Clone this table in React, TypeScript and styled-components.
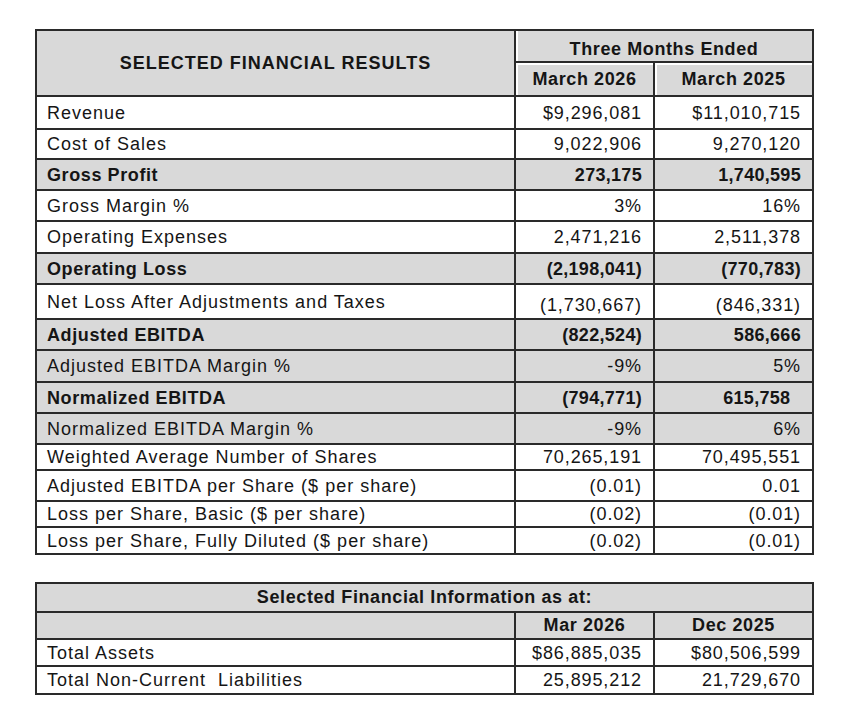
import React from "react";
import styled, { createGlobalStyle } from "styled-components";

const GlobalStyle = createGlobalStyle`
  html, body {
    margin: 0;
    padding: 0;
    background: #ffffff;
  }
  body {
    font-family: "Liberation Sans", Arial, sans-serif;
    color: #151515;
  }
`;

const Page = styled.div`
  display: flex;
  flex-direction: column;
  gap: 27px;
  padding: 29px 0 0 35px;
`;

const Table = styled.table`
  width: 777px;
  border-collapse: collapse;
  table-layout: fixed;
  border: 2px solid #2a2a2a;
  font-size: 18px;
`;

const Row = styled.tr<{ $h: number; $shade?: boolean }>`
  height: ${(p) => p.$h}px;
  background: ${(p) => (p.$shade ? "#d9d9d9" : "#ffffff")};
`;

const HeadRow = styled.tr<{ $h: number }>`
  height: ${(p) => p.$h}px;
  background: #d9d9d9;
`;

const Label = styled.td<{ $bold?: boolean }>`
  border: 2px solid #2a2a2a;
  padding: 0 0 0 10px;
  font-weight: ${(p) => (p.$bold ? 700 : 400)};
  letter-spacing: ${(p) => (p.$bold ? "0.6px" : "1px")};
  white-space: pre;
  vertical-align: middle;
  line-height: 1;
`;

const Num = styled.td<{ $bold?: boolean; $low?: boolean }>`
  border: 2px solid #2a2a2a;
  padding: ${(p) => (p.$low ? "0 11px 4px 0" : "0 11px 0 0")};
  text-align: right;
  font-weight: ${(p) => (p.$bold ? 700 : 400)};
  letter-spacing: ${(p) => (p.$bold ? "0.3px" : "0.9px")};
  white-space: pre;
  vertical-align: ${(p) => (p.$low ? "bottom" : "middle")};
  line-height: 1;
`;

const TitleCell = styled.th`
  border: 2px solid #2a2a2a;
  font-weight: 700;
  font-size: 18px;
  letter-spacing: 1px;
  text-align: center;
  vertical-align: middle;
  padding: 0;
  color: #151515;
`;

const PeriodCell = styled.th<{ $top?: boolean }>`
  border: 2px solid #2a2a2a;
  border-bottom-width: ${(p) => (p.$top ? "1px" : "2px")};
  box-shadow: inset 2px ${(p) => (p.$top ? "0" : "2px")} 0 #ffffff;
  font-weight: 700;
  font-size: 18px;
  letter-spacing: 0.6px;
  text-align: center;
  vertical-align: ${(p) => (p.$top ? "bottom" : "middle")};
  padding: ${(p) => (p.$top ? "0 0 3px 0" : "0")};
  line-height: 1;
  color: #151515;
`;

const SpanTitle = styled.th`
  border: 2px solid #2a2a2a;
  font-weight: 700;
  font-size: 18px;
  letter-spacing: 0.6px;
  text-align: center;
  vertical-align: middle;
  padding: 0;
  color: #151515;
`;

const Blank = styled.td`
  border: 2px solid #2a2a2a;
`;

interface Line {
  label: string;
  a: string;
  b: string;
  h: number;
  bold?: boolean;
  shade?: boolean;
  low?: boolean;
}

const results: Line[] = [
  { label: "Revenue", a: "$9,296,081", b: "$11,010,715", h: 33 },
  { label: "Cost of Sales", a: "9,022,906", b: "9,270,120", h: 30 },
  { label: "Gross Profit", a: "273,175", b: "1,740,595", h: 31, bold: true, shade: true },
  { label: "Gross Margin %", a: "3%", b: "16%", h: 31 },
  { label: "Operating Expenses", a: "2,471,216", b: "2,511,378", h: 32 },
  { label: "Operating Loss", a: "(2,198,041)", b: "(770,783)", h: 31, bold: true, shade: true },
  { label: "Net Loss After Adjustments and Taxes", a: "(1,730,667)", b: "(846,331)", h: 35, low: true },
  { label: "Adjusted EBITDA", a: "(822,524)", b: "586,666", h: 31, bold: true, shade: true },
  { label: "Adjusted EBITDA Margin %", a: "-9%", b: "5%", h: 32, shade: true },
  { label: "Normalized EBITDA", a: "(794,771)", b: "615,758\u00a0\u00a0", h: 31, bold: true, shade: true },
  { label: "Normalized EBITDA Margin %", a: "-9%", b: "6%", h: 31, shade: true },
  { label: "Weighted Average Number of Shares", a: "70,265,191", b: "70,495,551", h: 26 },
  { label: "Adjusted EBITDA per Share ($ per share)", a: "(0.01)", b: "0.01", h: 31 },
  { label: "Loss per Share, Basic ($ per share)", a: "(0.02)", b: "(0.01)", h: 26 },
  { label: "Loss per Share, Fully Diluted ($ per share)", a: "(0.02)", b: "(0.01)", h: 27 },
];

const position: Line[] = [
  { label: "Total Assets", a: "$86,885,035", b: "$80,506,599", h: 27 },
  { label: "Total Non-Current  Liabilities", a: "25,895,212", b: "21,729,670", h: 28 },
];

const Cols = () => (
  <colgroup>
    <col style={{ width: 479 }} />
    <col style={{ width: 139 }} />
    <col style={{ width: 159 }} />
  </colgroup>
);

const Lines = ({ items }: { items: Line[] }) => (
  <>
    {items.map((r) => (
      <Row key={r.label} $h={r.h} $shade={r.shade}>
        <Label $bold={r.bold}>{r.label}</Label>
        <Num $bold={r.bold} $low={r.low}>{r.a}</Num>
        <Num $bold={r.bold} $low={r.low}>{r.b}</Num>
      </Row>
    ))}
  </>
);

export default function App() {
  return (
    <>
      <GlobalStyle />
      <Page>
        <Table>
          <Cols />
          <thead>
            <HeadRow $h={32}>
              <TitleCell rowSpan={2}>SELECTED FINANCIAL RESULTS</TitleCell>
              <PeriodCell colSpan={2} $top>Three Months Ended</PeriodCell>
            </HeadRow>
            <HeadRow $h={34}>
              <PeriodCell>March 2026</PeriodCell>
              <PeriodCell>March 2025</PeriodCell>
            </HeadRow>
          </thead>
          <tbody>
            <Lines items={results} />
          </tbody>
        </Table>

        <Table>
          <Cols />
          <thead>
            <HeadRow $h={29}>
              <SpanTitle colSpan={3}>Selected Financial Information as at:</SpanTitle>
            </HeadRow>
            <HeadRow $h={27}>
              <Blank />
              <SpanTitle>Mar 2026</SpanTitle>
              <SpanTitle>Dec 2025</SpanTitle>
            </HeadRow>
          </thead>
          <tbody>
            <Lines items={position} />
          </tbody>
        </Table>
      </Page>
    </>
  );
}
